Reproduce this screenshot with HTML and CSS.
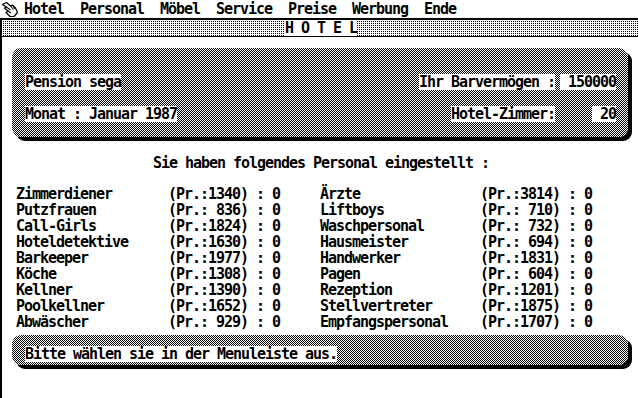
FILE: index.html
```html
<!DOCTYPE html>
<html lang="de">
<head>
  <meta charset="UTF-8" />
  <title>Hotel</title>
  <link rel="stylesheet" href="styles.css">
</head>
<body>
  <div class="menubar">
    <svg class="menu-icon" viewBox="0 0 18 17" width="18" height="17">
      <path d="M1.5 3.5 L5.5 1.5 L9.5 5 L11.5 4 L14.5 7 L16.5 11.5 L13 15.5 L9 15.5 L5 11.5 L7 10 L3.5 7 L5.5 6 Z" fill="#fff" stroke="#000" stroke-width="1.2" stroke-linejoin="round"/>
      <path d="M5.5 6 L9.5 9 M7 10 L10 12 M9.5 5 L12.5 8.5 M11.5 4 L14 8" fill="none" stroke="#000" stroke-width="1.1"/>
    </svg>
    <nav class="menu">
      <span>Hotel</span>
      <span>Personal</span>
      <span>Möbel</span>
      <span>Service</span>
      <span>Preise</span>
      <span>Werbung</span>
      <span>Ende</span>
    </nav>
  </div>

  <div class="window">
    <div class="titlebar"><span class="title">H O T E L</span></div>

    <div class="panel info">
      <div class="info-row">
        <span class="field">Pension sega</span>
        <span class="pair">
          <span class="field">Ihr Barvermögen :</span>
          <span class="slot"><span class="field"> 150000</span></span>
        </span>
      </div>
      <div class="info-row">
        <span class="field">Monat : Januar 1987</span>
        <span class="pair">
          <span class="field">Hotel-Zimmer:</span>
          <span class="slot"><span class="field"> 20</span></span>
        </span>
      </div>
    </div>

    <p class="heading">Sie haben folgendes Personal eingestellt :</p>

    <div class="staff">
      <span>Zimmerdiener</span><span>(Pr.:1340) : 0</span><span>Ärzte</span><span>(Pr.:3814) : 0</span>
      <span>Putzfrauen</span><span>(Pr.: 836) : 0</span><span>Liftboys</span><span>(Pr.: 710) : 0</span>
      <span>Call-Girls</span><span>(Pr.:1824) : 0</span><span>Waschpersonal</span><span>(Pr.: 732) : 0</span>
      <span>Hoteldetektive</span><span>(Pr.:1630) : 0</span><span>Hausmeister</span><span>(Pr.: 694) : 0</span>
      <span>Barkeeper</span><span>(Pr.:1977) : 0</span><span>Handwerker</span><span>(Pr.:1831) : 0</span>
      <span>Köche</span><span>(Pr.:1308) : 0</span><span>Pagen</span><span>(Pr.: 604) : 0</span>
      <span>Kellner</span><span>(Pr.:1390) : 0</span><span>Rezeption</span><span>(Pr.:1201) : 0</span>
      <span>Poolkellner</span><span>(Pr.:1652) : 0</span><span>Stellvertreter</span><span>(Pr.:1875) : 0</span>
      <span>Abwäscher</span><span>(Pr.: 929) : 0</span><span>Empfangspersonal</span><span>(Pr.:1707) : 0</span>
    </div>

    <div class="panel status">
      <span class="field">Bitte wählen sie in der Menuleiste aus.</span>
    </div>
  </div>
</body>
</html>
```

FILE: styles.css
```css
body {
  margin: 0;
  width: 638px;
  height: 398px;
  overflow: hidden;
  background: #fff;
  color: #000;
  font-family: "DejaVu Sans Mono", monospace;
  font-weight: bold;
  font-size: 15px;
  line-height: 16px;
  letter-spacing: -1.03px;
}

/* Menu bar */
.menubar {
  height: 18px;
  border-bottom: 1px solid #000;
  display: flex;
  align-items: center;
}

.menu-icon {
  margin-left: 1px;
  flex-shrink: 0;
}

.menu {
  display: flex;
  gap: 16px;
  margin-left: 5px;
}

/* Window */
.window {
  width: 640px;
  height: 379px;
  box-sizing: border-box;
  border-top: 1px solid #000;
  border-left: 2px solid #000;
}

.titlebar {
  height: 16px;
  border-bottom: 1px solid #000;
  display: flex;
  justify-content: center;
  background-image:
    linear-gradient(90deg, #fff 1px, transparent 1px),
    linear-gradient(#fff 1px, #000 1px);
  background-size: 2px 2px;
}

.title {
  background: #fff;
  white-space: pre;
}

/* Dithered panels */
.panel {
  width: 616px;
  box-sizing: border-box;
  margin-left: 10px;
  border-radius: 9px;
  box-shadow: 4px 4px 0 #000;
  background: repeating-conic-gradient(#000 0 25%, #fff 0 50%) 0 0 / 2px 2px;
}

.field {
  display: inline-block;
  height: 16px;
  background: #fff;
  white-space: pre;
}

.info {
  margin-top: 11px;
  height: 89px;
  padding: 26px 12px 0 13px;
  display: flex;
  flex-direction: column;
  gap: 16px;
}

.info-row {
  display: flex;
  justify-content: space-between;
}

.pair {
  display: flex;
  gap: 5px;
}

.slot {
  width: 56px;
  text-align: right;
}

.heading {
  margin: 18px 0 0;
  text-align: center;
}

.staff {
  display: grid;
  grid-template-columns: 152px 152px 160px auto;
  margin-top: 15px;
  padding-left: 14px;
  white-space: pre;
}

.status {
  margin-top: 5px;
  height: 30px;
  padding: 11px 13px 0;
}
```
